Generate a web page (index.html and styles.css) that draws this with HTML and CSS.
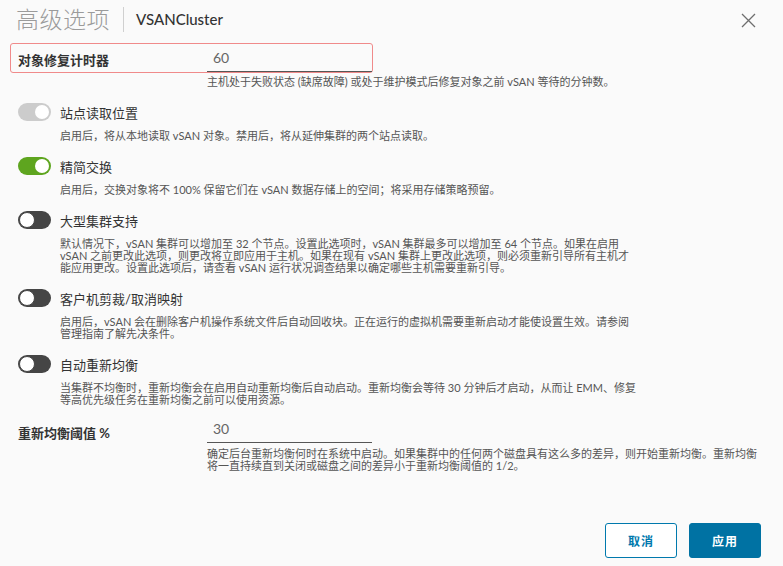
FILE: index.html
```html
<!DOCTYPE html>
<html lang="zh-CN">
<head>
<meta charset="utf-8">
<title>高级选项</title>
<link rel="stylesheet" href="styles.css">
</head>
<body>
<div class="dialog">
  <header class="header">
    <h1 class="title">高级选项</h1>
    <span class="sep"></span>
    <span class="subtitle">VSANCluster</span>
    <span class="close" aria-label="关闭">
      <svg width="15" height="15" viewBox="0 0 15 15"><path d="M1 1 L14 14 M14 1 L1 14" stroke="#6e6e6e" stroke-width="1.3" fill="none"/></svg>
    </span>
  </header>
  <main class="content">
    <div class="field field-hl">
      <span class="field-label">对象修复计时器</span>
      <span class="input">60</span>
    </div>
    <p class="help help-field">主机处于失败状态 (缺席故障) 或处于维护模式后修复对象之前 vSAN 等待的分钟数。</p>

    <div class="option option-first">
      <div class="option-head"><span class="toggle toggle-disabled"><span class="knob"></span></span><span class="option-label">站点读取位置</span></div>
      <p class="help help-option">启用后，将从本地读取 vSAN 对象。禁用后，将从延伸集群的两个站点读取。</p>
    </div>
    <div class="option">
      <div class="option-head"><span class="toggle toggle-on"><span class="knob"></span></span><span class="option-label">精简交换</span></div>
      <p class="help help-option">启用后，交换对象将不 100% 保留它们在 vSAN 数据存储上的空间；将采用存储策略预留。</p>
    </div>
    <div class="option">
      <div class="option-head"><span class="toggle toggle-off"><span class="knob"></span></span><span class="option-label">大型集群支持</span></div>
      <p class="help help-option">默认情况下，vSAN 集群可以增加至 32 个节点。设置此选项时，vSAN 集群最多可以增加至 64 个节点。如果在启用 vSAN 之前更改此选项，则更改将立即应用于主机。如果在现有 vSAN 集群上更改此选项，则必须重新引导所有主机才能应用更改。设置此选项后，请查看 vSAN 运行状况调查结果以确定哪些主机需要重新引导。</p>
    </div>
    <div class="option">
      <div class="option-head"><span class="toggle toggle-off"><span class="knob"></span></span><span class="option-label">客户机剪裁/取消映射</span></div>
      <p class="help help-option">启用后，vSAN 会在删除客户机操作系统文件后自动回收块。正在运行的虚拟机需要重新启动才能使设置生效。请参阅管理指南了解先决条件。</p>
    </div>
    <div class="option">
      <div class="option-head"><span class="toggle toggle-off"><span class="knob"></span></span><span class="option-label">自动重新均衡</span></div>
      <p class="help help-option">当集群不均衡时，重新均衡会在启用自动重新均衡后自动启动。重新均衡会等待 30 分钟后才启动，从而让 EMM、修复等高优先级任务在重新均衡之前可以使用资源。</p>
    </div>

    <div class="field field-plain">
      <span class="field-label">重新均衡阈值 %</span>
      <span class="input">30</span>
    </div>
    <p class="help help-field help-wide">确定后台重新均衡何时在系统中启动。如果集群中的任何两个磁盘具有这么多的差异，则开始重新均衡。重新均衡将一直持续直到关闭或磁盘之间的差异小于重新均衡阈值的 1/2。</p>
  </main>
  <footer class="footer">
    <button class="btn btn-outline">取消</button>
    <button class="btn btn-primary">应用</button>
  </footer>
</div>
</body>
</html>
```

FILE: styles.css
```css
* { box-sizing: border-box; }
html, body { margin: 0; padding: 0; }
body {
  background: #fafafa;
  font-family: "Lato", "Noto Sans CJK SC", sans-serif;
  color: #333;
}
.dialog {
  height: 566px;
  display: flex;
  flex-direction: column;
}
.header {
  display: flex;
  align-items: center;
  height: 38px;
  padding: 0 27px 0 16px;
}
.title {
  margin: 0;
  font-size: 23px;
  font-weight: 300;
  color: #9b9b9b;
  line-height: 26px;
  letter-spacing: 0.5px;
}
.sep {
  width: 1px;
  height: 25px;
  background: #d0d0d0;
  margin: 0 12px 0 13px;
}
.subtitle {
  font-size: 15px;
  font-weight: 500;
  color: #333;
}
.close {
  margin-left: auto;
  display: flex;
  align-items: center;
  margin-top: 3px;
}
.content {
  display: flex;
  flex-direction: column;
}
.field {
  display: flex;
  align-items: flex-end;
}
.field-hl {
  margin: 5px 0 0 10px;
  width: 363px;
  height: 30px;
  border: 1px solid #f08a8a;
  border-radius: 3px;
  padding-left: 7px;
}
.field-plain {
  margin: 9px 0 0 18px;
  height: 28px;
}
.field-label {
  width: 189px;
  font-size: 13px;
  font-weight: 700;
  color: #333;
  align-self: center;
}
.field-hl .field-label { margin-top: 2px; }
.field-plain .field-label { margin-top: 6px; }
.input {
  width: 165px;
  height: 28px;
  padding: 4px 0 0 6px;
  font-size: 14px;
  color: #666;
  border-bottom: 1px solid #565656;
  line-height: 20px;
}
.help {
  margin: 0;
  font-size: 11px;
  line-height: 12px;
  color: #555;
}
.help-field {
  margin: 3px 0 0 207px;
}
.help-wide { width: 553px; margin-top: 5px; }
.option {
  margin-top: 15px;
}
.option-first { margin-top: 15px; }
.option-head {
  display: flex;
  align-items: center;
  padding-left: 18px;
  height: 18px;
}
.option-label {
  margin-left: 9px;
  font-size: 13px;
  color: #333;
}
.help-option {
  margin: 9px 0 0 60px;
  width: 580px;
}
.toggle {
  width: 33px;
  height: 18px;
  border-radius: 9px;
  display: flex;
  align-items: center;
  padding: 0 2px;
  flex: none;
}
.knob {
  width: 14px;
  height: 14px;
  border-radius: 50%;
  background: #fff;
}
.toggle-disabled { background: #cccccc; justify-content: flex-end; }
.toggle-on { background: #5ea51f; justify-content: flex-end; }
.toggle-off { background: #454545; justify-content: flex-start; padding: 0 1px; }
.toggle-off .knob { width: 16px; height: 16px; border: 1px solid #454545; }
.footer {
  margin-top: auto;
  display: flex;
  justify-content: flex-end;
  gap: 12px;
  padding: 0 22px 8px 0;
}
.btn {
  width: 72px;
  height: 35px;
  border-radius: 3px;
  font-family: "Lato", "Noto Sans CJK SC", sans-serif;
  font-size: 12px;
  font-weight: 700;
  letter-spacing: 1px;
  cursor: pointer;
}
.btn-outline {
  background: #fff;
  border: 1px solid #0079ad;
  color: #0079ad;
}
.btn-primary {
  background: #0072a3;
  border: 1px solid #0072a3;
  color: #fff;
}
```
